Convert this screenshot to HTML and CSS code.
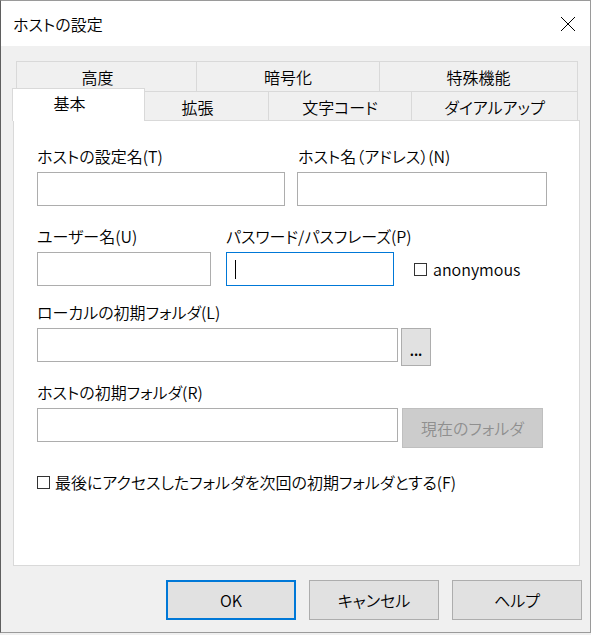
FILE: index.html
```html
<!DOCTYPE html>
<html lang="ja">
<head>
  <meta charset="UTF-8" />
  <meta name="viewport" content="width=device-width, initial-scale=1.0" />
  <title>ホストの設定</title>
  <link rel="stylesheet" href="styles.css">
</head>
<body>

  <div class="dialog">
    <div class="titlebar">
      <span class="title">ホストの設定</span>
      <svg class="close" width="16" height="16" viewBox="0 0 16 16">
        <path d="M1 1 L15 15 M15 1 L1 15" stroke="#000" stroke-width="1" fill="none" />
      </svg>
    </div>

    <div class="content">
      <div class="tabs">
        <div class="tab-row top">
          <div class="tab tab-offset w181">高度</div>
          <div class="tab w184">暗号化</div>
          <div class="tab w199">特殊機能</div>
        </div>
        <div class="tab-row bottom">
          <div class="tab selected tab-offset w133">基本</div>
          <div class="tab tab-offset w125">拡張</div>
          <div class="tab w144">文字コード</div>
          <div class="tab w167">ダイアルアップ</div>
        </div>
      </div>

      <div class="panel">
        <div class="row">
          <div class="field w248">
            <div class="label">ホストの設定名(T)</div>
            <div class="edit"></div>
          </div>
          <div class="field w250 gap12">
            <div class="label indent">ホスト名（アドレス）(N)</div>
            <div class="edit"></div>
          </div>
        </div>

        <div class="row row-b">
          <div class="field w174">
            <div class="label">ユーザー名(U)</div>
            <div class="edit"></div>
          </div>
          <div class="field w168 gap15">
            <div class="label">パスワード/パスフレーズ(P)</div>
            <div class="edit focused"><span class="caret"></span></div>
          </div>
          <div class="check anon"><span class="box"></span>anonymous</div>
        </div>

        <div class="group row-c">
          <div class="label">ローカルの初期フォルダ(L)</div>
          <div class="line">
            <div class="edit w361"></div>
            <button class="btn browse">...</button>
          </div>
        </div>

        <div class="group row-d">
          <div class="label">ホストの初期フォルダ(R)</div>
          <div class="line">
            <div class="edit w361"></div>
            <button class="btn current" disabled>現在のフォルダ</button>
          </div>
        </div>

        <div class="check last"><span class="box"></span>最後にアクセスしたフォルダを次回の初期フォルダとする(F)</div>
      </div>

      <div class="buttons">
        <button class="btn action default">OK</button>
        <button class="btn action">キャンセル</button>
        <button class="btn action">ヘルプ</button>
      </div>
    </div>
  </div>

</body>
</html>
```

FILE: styles.css
```css
body {
  margin: 0;
  background: #f0f0f0;
  font-family: "Noto Sans CJK JP", "Noto Sans", sans-serif;
  font-size: 16px;
  font-weight: 350;
  color: #000;
  font-feature-settings: "palt";
}
.dialog {
  width: 591px;
  height: 633px;
  box-sizing: border-box;
  border: 1px solid #9a9a9a;
  border-left-color: #5f5f5f;
  background: #f0f0f0;
}
.titlebar {
  height: 45px;
  background: #fff;
  display: flex;
  align-items: center;
  justify-content: space-between;
  padding: 0 14px 0 12px;
}
.title {
  line-height: 20px;
}
.content {
  padding: 15px 0 0 12px;
}

/* tabs */
.tabs {
  width: 567px;
}
.tab-row {
  display: flex;
}
.tab-row.top {
  margin-left: 3px;
  height: 30px;
}
.tab-row.bottom {
  margin-left: -1px;
  height: 29px;
  align-items: flex-end;
}
.tab {
  box-sizing: border-box;
  height: 100%;
  border: 1px solid #d9d9d9;
  border-bottom: none;
  background: #f0f0f0;
  text-align: center;
  padding-top: 3px;
  line-height: 24px;
  white-space: nowrap;
}
.tab + .tab {
  margin-left: -1px;
}
.tab-offset {
  padding-right: 18px;
}
.tab.selected {
  position: relative;
  z-index: 1;
  height: 33px;
  margin-bottom: -1px;
  background: #fff;
  padding-top: 2px;
}
.w181 { width: 181px; }
.w184 { width: 184px; }
.w199 { width: 199px; }
.w133 { width: 133px; }
.w125 { width: 125px; }
.w144 { width: 144px; }
.w167 { width: 167px; }

/* panel */
.panel {
  width: 567px;
  height: 446px;
  box-sizing: border-box;
  border: 1px solid #d9d9d9;
  background: #fff;
  padding: 25px 0 0 23px;
}
.row {
  display: flex;
  align-items: flex-end;
}
.row-b {
  margin-top: 20px;
}
.row-c, .row-d {
  margin-top: 16px;
}
.field {
  display: flex;
  flex-direction: column;
}
.label {
  height: 20px;
  line-height: 20px;
  margin-bottom: 6px;
  white-space: nowrap;
}
.label.indent {
  padding-left: 1px;
}
.edit {
  height: 34px;
  box-sizing: border-box;
  border: 1px solid #adadad;
  background: #fff;
}
.edit.focused {
  border-color: #0078d7;
  display: flex;
  align-items: center;
  padding-left: 8px;
}
.caret {
  width: 1px;
  height: 19px;
  background: #000;
}
.w248 { width: 248px; }
.w250 { width: 250px; }
.w174 { width: 174px; }
.w168 { width: 168px; }
.w361 { width: 361px; }
.gap12 { margin-left: 12px; }
.gap15 { margin-left: 15px; }

.line {
  display: flex;
  align-items: flex-start;
}

.check {
  display: flex;
  align-items: center;
  line-height: 20px;
  white-space: nowrap;
}
.box {
  width: 13px;
  height: 13px;
  box-sizing: border-box;
  border: 1px solid #333;
  background: #fff;
  margin-right: 5px;
}
.check.anon {
  margin-left: 20px;
  height: 34px;
}
.check.anon .box {
  margin-right: 6px;
}
.check.last {
  margin-top: 24px;
}

/* buttons */
.btn {
  font-family: inherit;
  font-size: 16px;
  font-weight: 350;
  font-feature-settings: "palt";
  color: #000;
  background: #e1e1e1;
  border: 1px solid #adadad;
  box-sizing: border-box;
  padding: 0;
  margin: 0;
}
.btn.browse {
  width: 30px;
  height: 38px;
  margin-left: 3px;
  font-size: 13px;
  font-weight: bold;
  padding-top: 6px;
}
.btn.current {
  width: 141px;
  height: 40px;
  margin-left: 4px;
  background: #cccccc;
  border-color: #bfbfbf;
  color: #8f8f8f;
}
.buttons {
  display: flex;
  justify-content: flex-end;
  gap: 13px;
  margin-top: 14px;
  padding-right: 8px;
}
.btn.action {
  width: 130px;
  height: 40px;
}
.btn.default {
  border: 2px solid #0078d7;
}
```
